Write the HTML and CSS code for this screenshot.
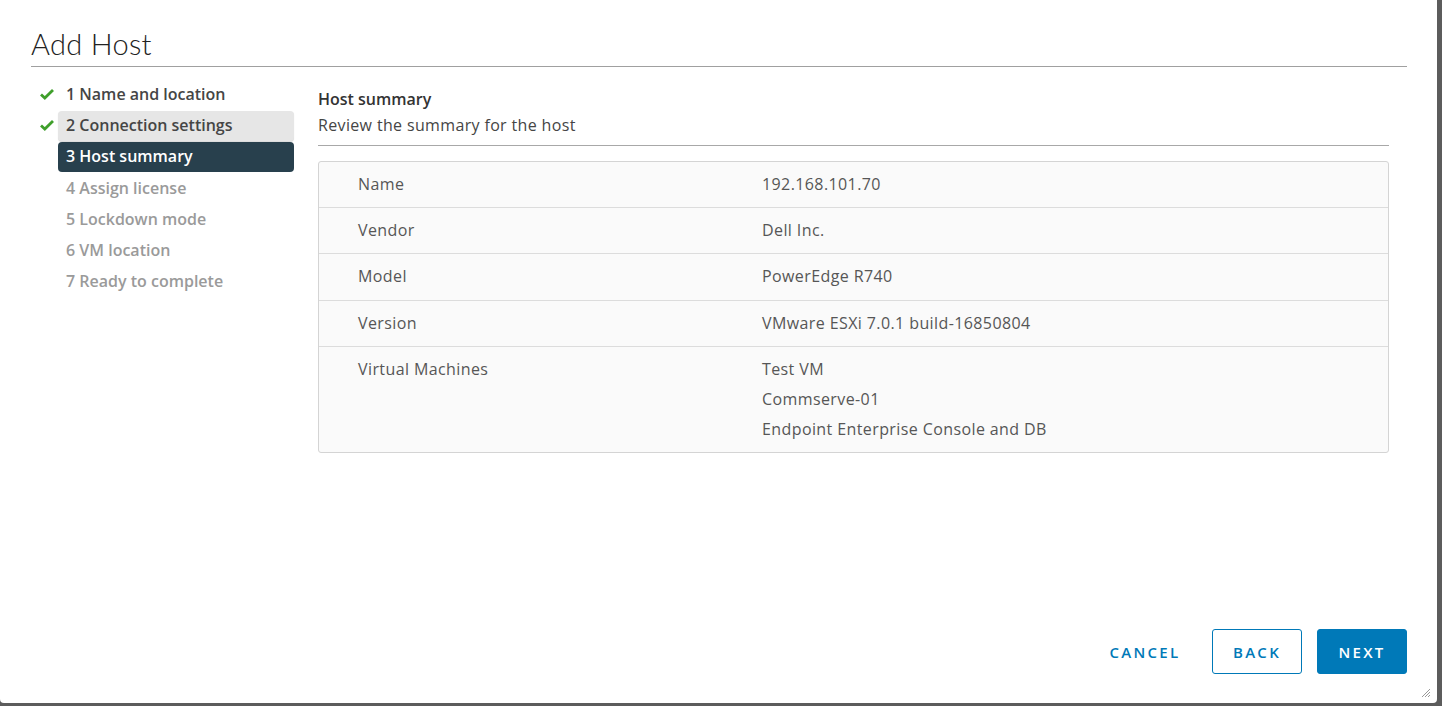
FILE: index.html
```html
<!DOCTYPE html>
<html lang="en">
<head>
  <meta charset="UTF-8">
  <title>Add Host</title>
  <link rel="stylesheet" href="styles.css">
</head>
<body>
  <div class="modal">
    <h1 class="modal-title">Add Host</h1>

    <div class="modal-body">
      <ul class="steps">
        <li class="step done">
          <svg class="check" viewBox="0 0 16 16" width="16" height="16"><path d="M2 8.5l3.8 3.6L14 4" /></svg>
          <span class="step-label">1 Name and location</span>
        </li>
        <li class="step done">
          <svg class="check" viewBox="0 0 16 16" width="16" height="16"><path d="M2 8.5l3.8 3.6L14 4" /></svg>
          <span class="step-label visited">2 Connection settings</span>
        </li>
        <li class="step">
          <span class="step-label active">3 Host summary</span>
        </li>
        <li class="step"><span class="step-label todo">4 Assign license</span></li>
        <li class="step"><span class="step-label todo">5 Lockdown mode</span></li>
        <li class="step"><span class="step-label todo">6 VM location</span></li>
        <li class="step"><span class="step-label todo">7 Ready to complete</span></li>
      </ul>

      <div class="content">
        <div class="content-head">
          <h3>Host summary</h3>
          <p>Review the summary for the host</p>
        </div>

        <div class="summary">
          <div class="row">
            <div class="key">Name</div>
            <div class="val">192.168.101.70</div>
          </div>
          <div class="row">
            <div class="key">Vendor</div>
            <div class="val">Dell Inc.</div>
          </div>
          <div class="row">
            <div class="key">Model</div>
            <div class="val">PowerEdge R740</div>
          </div>
          <div class="row">
            <div class="key">Version</div>
            <div class="val">VMware ESXi 7.0.1 build-16850804</div>
          </div>
          <div class="row">
            <div class="key">Virtual Machines</div>
            <div class="val list">
              <span>Test VM</span>
              <span>Commserve-01</span>
              <span>Endpoint Enterprise Console and DB</span>
            </div>
          </div>
        </div>
      </div>
    </div>

    <div class="modal-footer">
      <button type="button" class="btn btn-link">Cancel</button>
      <button type="button" class="btn btn-outline">Back</button>
      <button type="button" class="btn btn-primary">Next</button>
    </div>

    <svg class="grip" viewBox="0 0 12 12" width="12" height="12">
      <path d="M11 3L3 11M11 6L6 11M11 9L9 11" />
    </svg>
  </div>
</body>
</html>
```

FILE: styles.css
```css
html, body {
  margin: 0;
  padding: 0;
  height: 100%;
}

body {
  background: #5c5c5c;
  font-family: "Open Sans", "Lato", sans-serif;
  color: #565656;
}

.modal {
  position: relative;
  width: 1437px;
  height: 703px;
  background: white;
  border-radius: 0 0 4px 4px;
  box-sizing: border-box;
  padding: 0 30px 0 31px;
  display: flex;
  flex-direction: column;
}

.modal-title {
  margin: 0;
  padding-top: 26px;
  height: 40px;
  font-family: "Lato", sans-serif;
  font-size: 29px;
  font-weight: 300;
  letter-spacing: 0.3px;
  color: #222;
  line-height: 36px;
  border-bottom: 1px solid #a0a0a0;
}

.modal-body {
  flex: 1;
  display: flex;
}

.steps {
  list-style: none;
  margin: 0;
  padding: 12px 0 0 0;
  width: 263px;
  flex: none;
}

.step {
  display: flex;
  align-items: center;
  height: 31.3px;
  position: relative;
}

.step-label {
  margin-left: 27px;
  width: 236px;
  height: 30px;
  line-height: 29px;
  box-sizing: border-box;
  padding-left: 8px;
  border-radius: 4px;
  font-size: 16px;
  font-weight: 600;
  color: #454545;
}

.step-label.visited {
  background: #e6e6e6;
  box-shadow: 0 1px 1px rgba(0,0,0,0.15);
}

.step-label.active {
  background: #28404d;
  color: white;
}

.step-label.todo {
  color: #9a9a9a;
}

.check {
  position: absolute;
  left: 8px;
  top: 7px;
  fill: none;
  stroke: #3f9f2b;
  stroke-width: 2.8;
}

.content {
  flex: 1;
  padding-left: 24px;
  padding-right: 18px;
}

.content-head {
  padding-top: 21px;
  height: 57px;
  border-bottom: 1px solid #a8a8a8;
}

.content-head h3 {
  margin: 0;
  font-size: 16px;
  font-weight: 600;
  color: #333;
  line-height: 22px;
}

.content-head p {
  margin: 4px 0 0;
  font-size: 16px;
  letter-spacing: 0.35px;
  color: #454545;
  line-height: 22px;
}

.summary {
  margin-top: 15px;
  border: 1px solid #d4d4d4;
  border-radius: 3px;
  background: #fafafa;
}

.row {
  display: flex;
  border-top: 1px solid #dcdcdc;
  min-height: 45.3px;
  font-size: 16px;
  letter-spacing: 0.4px;
  font-weight: 400;
}

.row:first-child {
  border-top: none;
  min-height: 45px;
}

.key {
  width: 404px;
  padding-left: 39px;
  padding-top: 11px;
  line-height: 22px;
}

.val {
  padding-top: 11px;
  line-height: 22px;
}

.val.list {
  display: flex;
  flex-direction: column;
  gap: 8px;
  padding-bottom: 12px;
}

.modal-footer {
  display: flex;
  justify-content: flex-end;
  align-items: center;
  gap: 10px;
  padding-bottom: 29px;
}

.btn {
  height: 45px;
  width: 90px;
  border-radius: 3px;
  font-family: inherit;
  font-size: 15px;
  font-weight: 600;
  letter-spacing: 2.3px;
  text-transform: uppercase;
  cursor: pointer;
  padding: 0;
}

.btn-link {
  background: none;
  border: none;
  color: #0079b8;
  width: 102px;
  margin-right: 6px;
}

.btn-outline {
  background: white;
  border: 1px solid #0079b8;
  color: #0079b8;
  margin-right: 5px;
}

.btn-primary {
  background: #0079b8;
  border: 1px solid #0079b8;
  color: white;
}

.grip {
  position: absolute;
  right: 6px;
  bottom: 5px;
  fill: none;
  stroke: #999;
  stroke-width: 1;
}
```
